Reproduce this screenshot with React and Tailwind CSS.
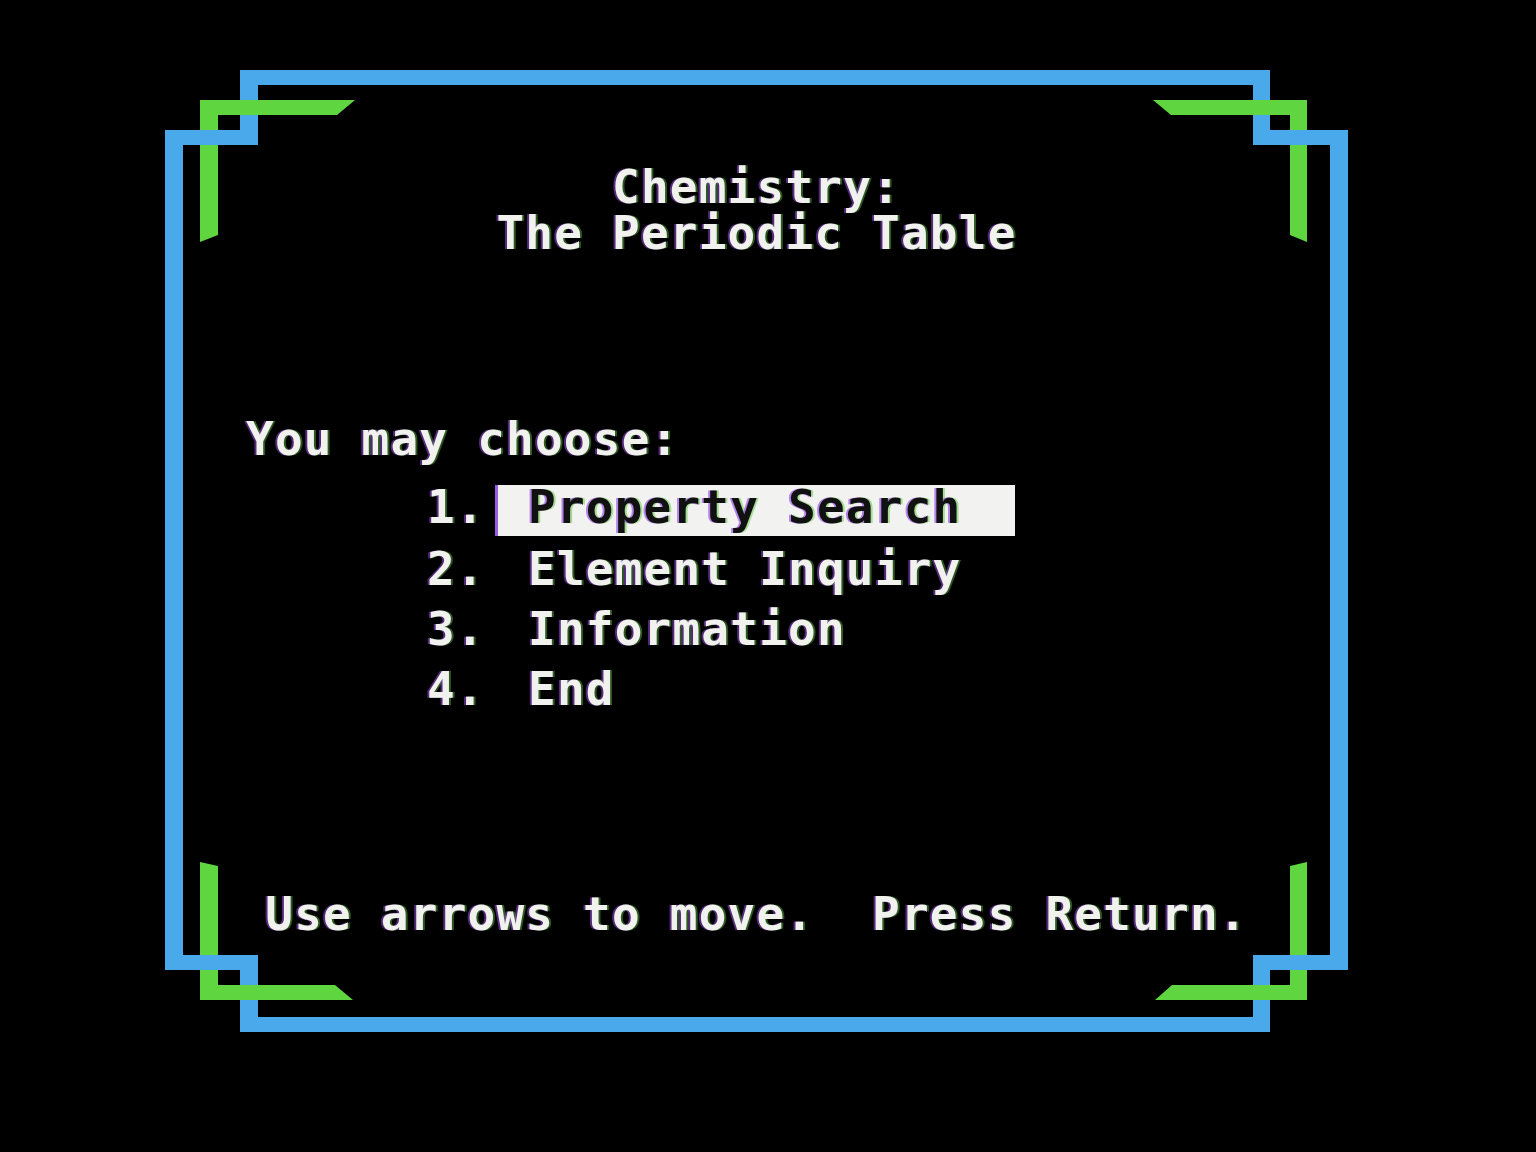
import React from 'react';

const BLUE = '#4aa9ea';
const GREEN = '#5fd63f';

// blue frame pieces, coords relative to the frame box (165,70)
const blueVerticals = [
  [75, 0, 18, 75],
  [0, 60, 18, 840],
  [75, 885, 18, 77],
  [1088, 0, 17, 75],
  [1165, 60, 18, 840],
  [1088, 885, 17, 77],
];

const blueLong = [
  [75, 0, 1030, 15],
  [75, 947, 1030, 15],
];

// the step pieces cross over the green verticals, so they go on top
const blueSteps = [
  [0, 60, 93, 15],
  [0, 885, 93, 15],
  [1088, 60, 95, 15],
  [1088, 885, 95, 15],
];

const greenCorners = [
  '35,30 190,30 172,45 53,45 53,165 35,172',
  '988,30 1142,30 1142,172 1125,165 1125,45 1006,45',
  '35,792 53,796 53,915 170,915 188,930 35,930',
  '1142,792 1125,796 1125,915 1007,915 990,930 1142,930',
];

const menu = [
  { n: '1.', label: 'Property Search', selected: true },
  { n: '2.', label: 'Element Inquiry' },
  { n: '3.', label: 'Information' },
  { n: '4.', label: 'End' },
];

const Frame = () => (
  <svg
    className="absolute inset-0 [filter:blur(0.7px)]"
    width="1183"
    height="962"
    viewBox="0 0 1183 962"
  >
    {blueVerticals.concat(blueLong).map(([x, y, w, h], i) => (
      <rect key={'b' + i} x={x} y={y} width={w} height={h} fill={BLUE} />
    ))}
    {greenCorners.map((pts, i) => (
      <polygon key={'g' + i} points={pts} fill={GREEN} />
    ))}
    {blueSteps.map(([x, y, w, h], i) => (
      <rect key={'s' + i} x={x} y={y} width={w} height={h} fill={BLUE} />
    ))}
  </svg>
);

const App = () => {
  return (
    <div className="h-[1152px] w-full overflow-hidden bg-black pt-[70px] pl-[165px]">
      <div className="relative w-[1183px] h-[962px]">
        <Frame />

        <div className="relative flex flex-col font-['DejaVu_Sans_Mono','Liberation_Mono',monospace] font-bold text-[46px] leading-[46px] tracking-[1.2px] text-[#f1f1ee] [text-shadow:-2px_0_rgba(168,85,247,0.5),2px_0_rgba(110,220,80,0.4)] [filter:blur(0.5px)]">
          {/* Title */}
          <div className="pt-[94px] text-center">
            <div>Chemistry:</div>
            <div>The Periodic Table</div>
          </div>

          <div className="mt-[160px] pl-[81px]">You may choose:</div>

          {/* Menu */}
          <div className="mt-[15px] pl-[262px]">
            {menu.map((item) => (
              <div
                key={item.n}
                className={`flex items-start ${item.selected ? 'h-[62px]' : 'h-[60px]'}`}
              >
                <span className="w-[71px] leading-[60px]">{item.n}</span>
                {item.selected ? (
                  <span className="mt-[8px] h-[51px] leading-[45px] pl-[30px] pr-[54px] bg-[#f2f2f0] text-[#111] [text-shadow:-2px_0_rgba(140,60,230,0.6),2px_0_rgba(90,200,60,0.5)] shadow-[-3px_0_0_#9b5de5]">
                    {item.label}
                  </span>
                ) : (
                  <span className="leading-[60px] pl-[30px]">{item.label}</span>
                )}
              </div>
            ))}
          </div>

          <div className="mt-[172px] text-center whitespace-pre">
            Use arrows to move.  Press Return.
          </div>
        </div>
      </div>
    </div>
  );
};

export default App;
